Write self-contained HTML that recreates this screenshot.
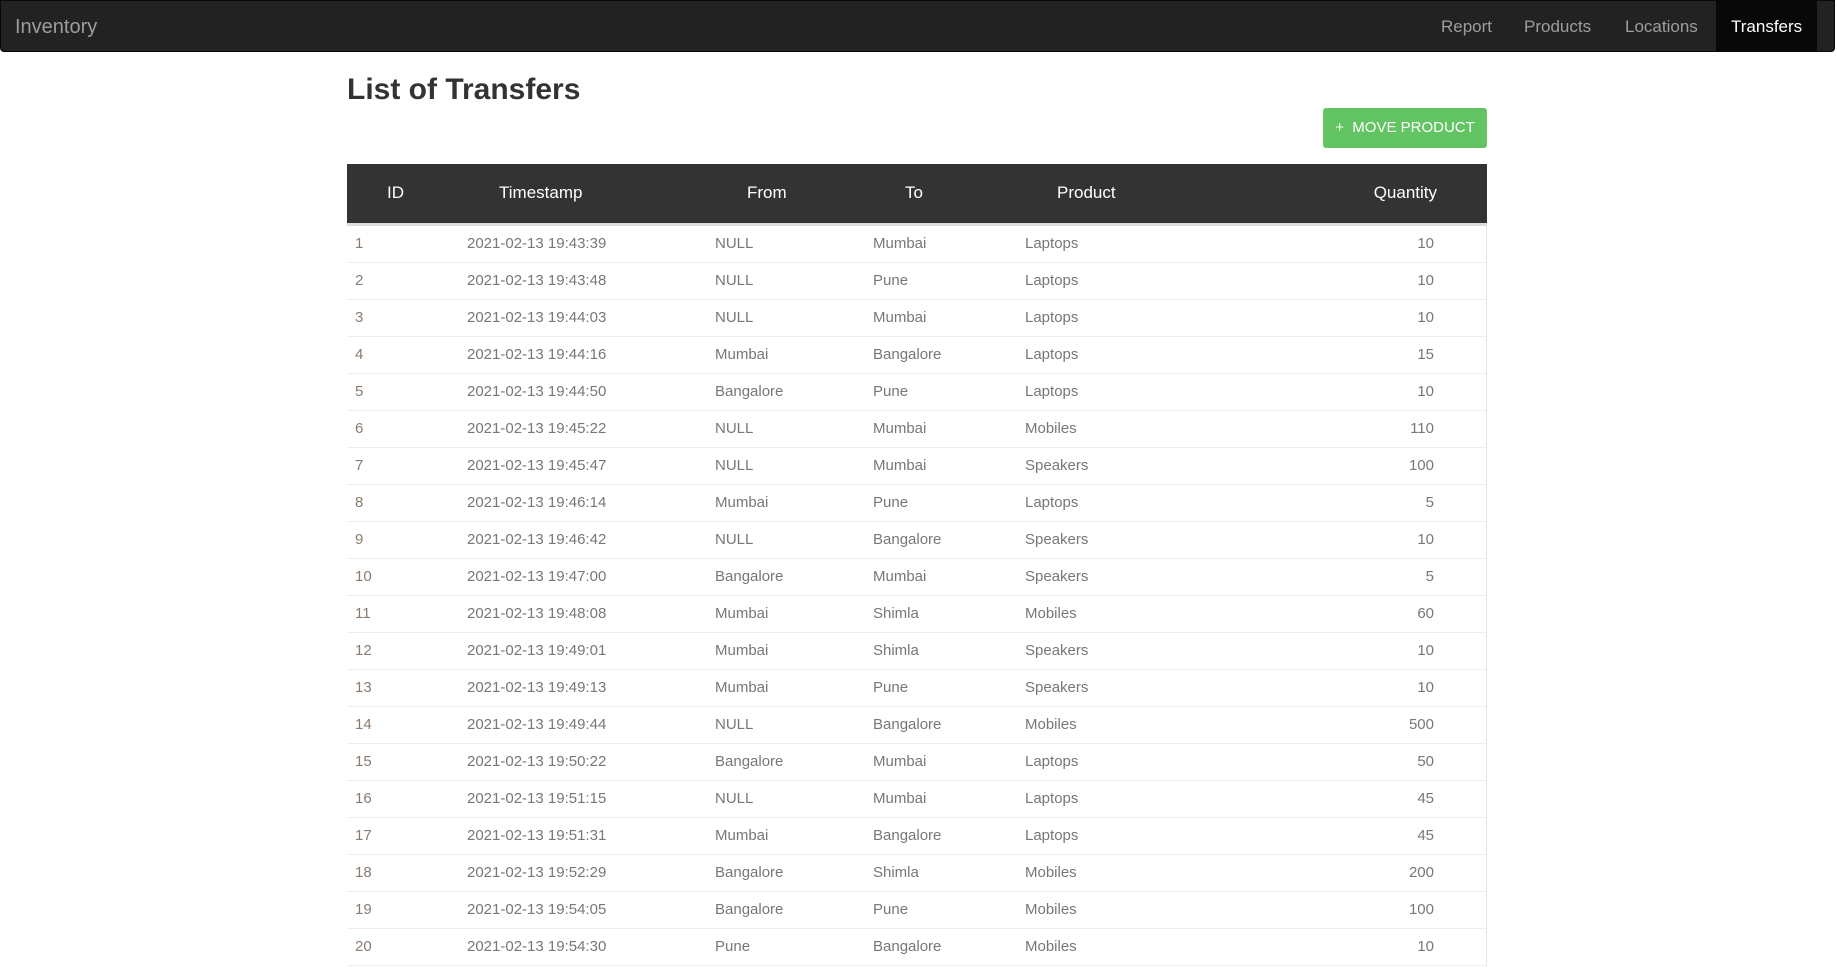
<!DOCTYPE html>
<html><head><meta charset="utf-8"><style>
*{box-sizing:border-box;margin:0;padding:0}
body{width:1837px;height:979px;overflow:hidden;background:#fff;font-family:"Liberation Sans",sans-serif;position:relative}
.nav{position:absolute;left:0;top:0;width:1835px;height:52px;background:#222;border:1px solid #080808;border-radius:0 0 4px 4px}
.brand{position:absolute;left:14px;top:15px;font-size:20px;color:#9d9d9d}
.nav a{position:absolute;top:0;height:50px;line-height:51px;font-size:17px;color:#9d9d9d;text-decoration:none}
.nav a.act{background:#080808;color:#fff;padding:0 15px}
h1{position:absolute;left:347px;top:73px;font-size:30px;font-weight:bold;color:#333}
.btn{position:absolute;left:1323px;top:108px;width:164px;height:40px;background:#62c462;border-radius:3px;color:#fff;font-size:15px;line-height:40px;text-align:center}
.thead{position:absolute;left:347px;top:164px;width:1140px;height:59px;background:#333;border-bottom:3px solid #ddd;box-sizing:content-box}
.thead span,.row span{position:absolute;white-space:nowrap}
.thead span{color:#fff;font-size:17px;top:19px}
.rows{position:absolute;left:347px;top:226px;width:1140px;border-right:1px solid #e5e5e5}
.row{position:relative;height:37px;border-bottom:1px solid #eee}
.row span{top:9px;font-size:15px;color:#777}
.row span.id{color:#8a7b70}
</style></head><body>
<div class="nav"><div class="brand">Inventory</div>
<a style="left:1440px">Report</a><a style="left:1523px">Products</a><a style="left:1624px">Locations</a><a class="act" style="left:1715px">Transfers</a></div>
<h1>List of Transfers</h1>
<div class="btn">+&nbsp; MOVE PRODUCT</div>
<div class="thead">
<span style="left:40px">ID</span><span style="left:152px">Timestamp</span><span style="left:400px">From</span><span style="left:558px">To</span><span style="left:710px">Product</span><span style="right:50px">Quantity</span>
</div>
<div class="rows" id="rows"></div>
<script>
var d=[["1","2021-02-13 19:43:39","NULL","Mumbai","Laptops","10"],["2","2021-02-13 19:43:48","NULL","Pune","Laptops","10"],["3","2021-02-13 19:44:03","NULL","Mumbai","Laptops","10"],["4","2021-02-13 19:44:16","Mumbai","Bangalore","Laptops","15"],["5","2021-02-13 19:44:50","Bangalore","Pune","Laptops","10"],["6","2021-02-13 19:45:22","NULL","Mumbai","Mobiles","110"],["7","2021-02-13 19:45:47","NULL","Mumbai","Speakers","100"],["8","2021-02-13 19:46:14","Mumbai","Pune","Laptops","5"],["9","2021-02-13 19:46:42","NULL","Bangalore","Speakers","10"],["10","2021-02-13 19:47:00","Bangalore","Mumbai","Speakers","5"],["11","2021-02-13 19:48:08","Mumbai","Shimla","Mobiles","60"],["12","2021-02-13 19:49:01","Mumbai","Shimla","Speakers","10"],["13","2021-02-13 19:49:13","Mumbai","Pune","Speakers","10"],["14","2021-02-13 19:49:44","NULL","Bangalore","Mobiles","500"],["15","2021-02-13 19:50:22","Bangalore","Mumbai","Laptops","50"],["16","2021-02-13 19:51:15","NULL","Mumbai","Laptops","45"],["17","2021-02-13 19:51:31","Mumbai","Bangalore","Laptops","45"],["18","2021-02-13 19:52:29","Bangalore","Shimla","Mobiles","200"],["19","2021-02-13 19:54:05","Bangalore","Pune","Mobiles","100"],["20","2021-02-13 19:54:30","Pune","Bangalore","Mobiles","10"]];
var h="";d.forEach(function(r){h+='<div class="row"><span class="id" style="left:8px">'+r[0]+'</span><span style="left:120px">'+r[1]+'</span><span style="left:368px">'+r[2]+'</span><span style="left:526px">'+r[3]+'</span><span style="left:678px">'+r[4]+'</span><span style="right:52px">'+r[5]+'</span></div>';});
document.getElementById("rows").innerHTML=h;
</script>
</body></html>
